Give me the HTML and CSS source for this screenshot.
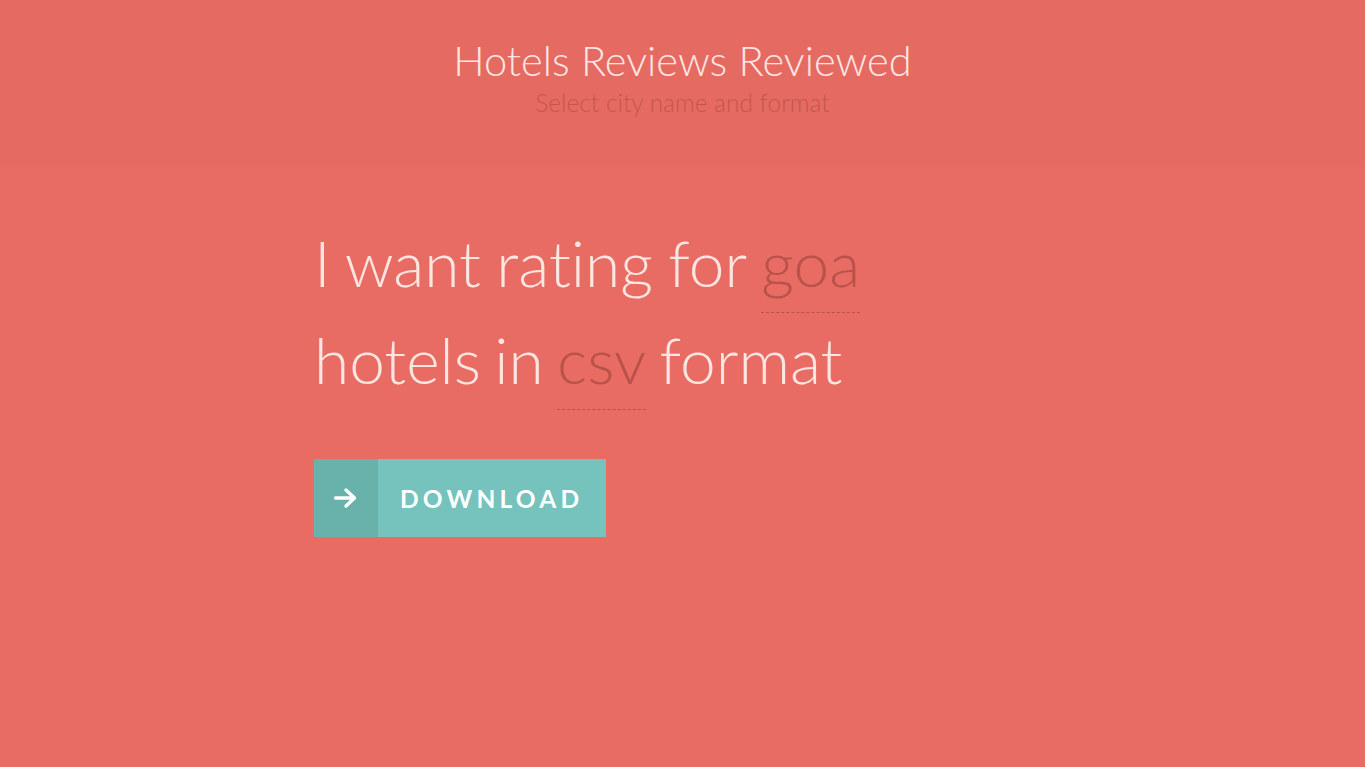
FILE: index.html
```html
<!DOCTYPE html>
<html>
<head>
<meta charset="utf-8">
<link rel="stylesheet" href="styles.css">
</head>
<body>
<header class="header">
  <h1 class="title">Hotels Reviews Reviewed</h1>
  <p class="subtitle">Select city name and format</p>
</header>
<main class="main">
  <form class="form">
    <p class="sentence"><span class="line-one">I want rating for <span class="choice">goa</span></span><br>hotels in <span class="choice">csv</span> format</p>
    <button type="button" class="btn">
      <span class="btn-icon"><svg width="26" height="22" viewBox="0 0 26 22"><path d="M2.5 11h19M13 3l8.5 8-8.5 8" fill="none" stroke="#fff" stroke-width="3.4" stroke-linecap="round" stroke-linejoin="round"/></svg></span>
      <span class="btn-label">DOWNLOAD</span>
    </button>
  </form>
</main>
</body>
</html>
```
FILE: styles.css
```css
html, body {
  margin: 0;
  padding: 0;
  height: 100%;
}
body {
  background: #e86c63;
  font-family: Lato, "Open Sans", sans-serif;
  font-weight: 300;
  font-variant-ligatures: none;
}
.header {
  background: #e56b62;
  height: 166px;
  box-sizing: border-box;
  padding-top: 35px;
  text-align: center;
}
.title {
  margin: 0;
  font-size: 41.6px;
  font-weight: 300;
  line-height: 50px;
  color: #fde6e2;
}
.subtitle {
  margin: 0;
  font-size: 24.5px;
  line-height: 36px;
  color: #c4564f;
}
.main {
  display: flex;
  justify-content: center;
}
.form {
  width: 740px;
  padding-top: 48px;
  padding-left: 1px;
}
.sentence {
  margin: 0;
  font-size: 64px;
  line-height: 97px;
  color: #fde6e2;
  word-spacing: -4px;
  padding-left: 1px;
}
.line-one {
  word-spacing: -2px;
}
.choice {
  color: #b8524b;
  display: inline-block;
  line-height: 64px;
  padding-bottom: 17px;
  margin-bottom: -8px;
  border-bottom: 1px dashed #b8524b;
  word-spacing: 0;
}
.btn {
  margin-top: 51px;
  margin-left: 1px;
  display: flex;
  align-items: stretch;
  height: 78px;
  padding: 0;
  border: none;
  background: #76c2bd;
  font-family: inherit;
  cursor: pointer;
}
.btn-icon {
  width: 64px;
  background: #69b1ab;
  display: flex;
  align-items: center;
  justify-content: center;
}
.btn-label {
  display: flex;
  align-items: center;
  padding: 0 23px 0 22px;
  color: #fff;
  font-weight: 700;
  font-size: 24.5px;
  letter-spacing: 4.2px;
}
```
